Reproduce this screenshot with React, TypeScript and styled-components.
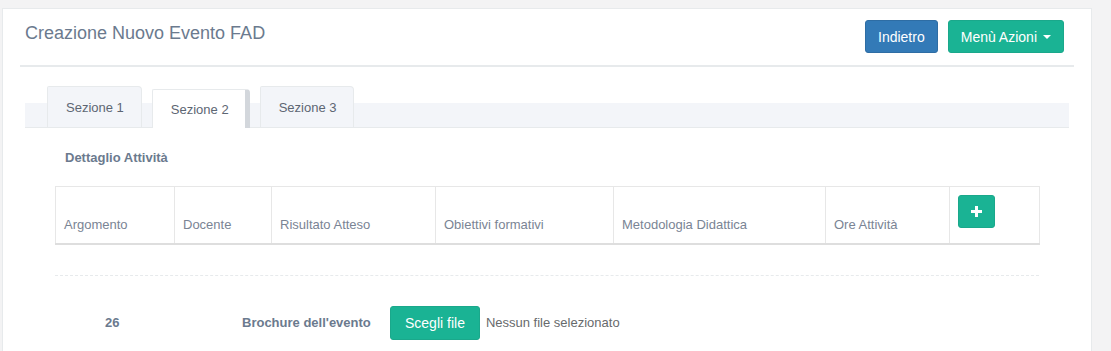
import React from "react";
import styled, { createGlobalStyle } from "styled-components";

const GlobalStyle = createGlobalStyle`
  html, body { margin: 0; padding: 0; background: #f3f3f4; }
  body { font-family: "Liberation Sans", Arial, sans-serif; font-size: 13px; color: #676a6c; }
  * { box-sizing: border-box; }
`;

const Page = styled.div`
  padding: 8px 19px 0 2px;
  height: 351px;
  overflow: hidden;
`;

const Panel = styled.div`
  background: #fff;
  border: 1px solid #e7eaec;
  border-bottom: none;
  padding: 0 17px;
  height: 343px;
`;

const Header = styled.div`
  display: flex;
  align-items: flex-start;
  justify-content: space-between;
  height: 58px;
  border-bottom: 2px solid #e7eaec;
  padding: 11px 10px 0 5px;
`;

const Title = styled.h2`
  margin: 0;
  padding-top: 2px;
  font-size: 18px;
  font-weight: 400;
  line-height: 22px;
  color: #6b7a8e;
`;

const Actions = styled.div`
  display: flex;
  gap: 10px;
`;

const Button = styled.button<{ $variant: "primary" | "success" }>`
  font-family: "Liberation Sans", Arial, sans-serif;
  font-size: 14px;
  line-height: 20px;
  height: 33px;
  padding: 0 12px;
  border-radius: 3px;
  border: 1px solid ${(p) => (p.$variant === "primary" ? "#2e6da4" : "#1aa88b")};
  background: ${(p) => (p.$variant === "primary" ? "#337ab7" : "#1ab394")};
  color: #fff;
  display: inline-flex;
  align-items: center;
  gap: 4px;
  cursor: pointer;
`;

const Caret = styled.span`
  display: inline-block;
  width: 0;
  height: 0;
  border-left: 4px solid transparent;
  border-right: 4px solid transparent;
  border-top: 4px solid #fff;
  margin-left: 2px;
`;

const TabArea = styled.div`
  margin: 19px 5px 0 5px;
`;

const TabStrip = styled.div`
  display: flex;
  align-items: flex-end;
  gap: 10px;
  padding-left: 22px;
  height: 42px;
  border-bottom: 1px solid #e7eaec;
  background: linear-gradient(to bottom, transparent 0, transparent 17px, #f3f5f9 17px);
`;

const Tab = styled.div<{ $active?: boolean }>`
  height: ${(p) => (p.$active ? "39px" : "41px")};
  padding: 0 ${(p) => (p.$active ? "16px" : "17px")} 0 18px;
  display: flex;
  align-items: center;
  font-size: 13px;
  color: #5d6673;
  background: ${(p) => (p.$active ? "#fff" : "#f3f5f9")};
  border: 1px solid #e7eaec;
  border-bottom: none;
  border-right: ${(p) => (p.$active ? "5px solid #d3d7dc" : "1px solid #e7eaec")};
  border-radius: 2px 4px 0 0;
  margin-bottom: ${(p) => (p.$active ? "-1px" : "0")};
  padding-top: ${(p) => (p.$active ? "1px" : "0")};
`;

const Section = styled.div`
  padding: 0 35px 0 35px;
`;

const SectionTitle = styled.div`
  font-weight: 700;
  font-size: 13px;
  color: #6b7a8e;
  padding: 22px 0 0 10px;
  height: 58px;
`;

const Table = styled.table`
  width: 984px;
  border-collapse: collapse;
  table-layout: fixed;
`;

const Th = styled.th<{ $w: number }>`
  width: ${(p) => p.$w}px;
  border: 1px solid #e7e7e7;
  border-bottom: 2px solid #dedede;
  text-align: left;
  vertical-align: bottom;
  padding: 8px 8px 8px;
  font-weight: 400;
  font-size: 13px;
  line-height: 20px;
  color: #7a8494;
  height: 57px;
`;

const ThBtn = styled(Th)`
  vertical-align: top;
  padding-top: 8px;
`;

const AddButton = styled.button`
  width: 37px;
  height: 33px;
  border-radius: 3px;
  background: #1ab394;
  border: 1px solid #1aa88b;
  display: flex;
  align-items: center;
  justify-content: center;
  padding: 0;
  cursor: pointer;
`;

const Divider = styled.div`
  margin-top: 30px;
  width: 984px;
  border-top: 1px dashed #e7eaec;
`;

const FormRow = styled.div`
  display: flex;
  align-items: center;
  margin-top: 30px;
  height: 34px;
`;

const RowNum = styled.div`
  width: 187px;
  padding-left: 50px;
  font-weight: 700;
  color: #6b7a8e;
`;

const RowLabel = styled.div`
  width: 148px;
  font-weight: 700;
  color: #6b7a8e;
`;

const FileButton = styled(Button)`
  height: 34px;
  padding: 0 14px;
`;

const FileName = styled.span`
  margin-left: 6px;
  font-size: 13px;
  color: #676a6c;
`;

const cols: [string, number][] = [
  ["Argomento", 119],
  ["Docente", 97],
  ["Risultato Atteso", 164],
  ["Obiettivi formativi", 178],
  ["Metodologia Didattica", 212],
  ["Ore Attività", 124],
];

export default function App() {
  return (
    <>
      <GlobalStyle />
      <Page>
        <Panel>
          <Header>
            <Title>Creazione Nuovo Evento FAD</Title>
            <Actions>
              <Button $variant="primary">Indietro</Button>
              <Button $variant="success">
                Menù Azioni <Caret />
              </Button>
            </Actions>
          </Header>
          <TabArea>
            <TabStrip>
              <Tab>Sezione 1</Tab>
              <Tab $active>Sezione 2</Tab>
              <Tab>Sezione 3</Tab>
            </TabStrip>
          </TabArea>
          <Section>
            <SectionTitle>Dettaglio Attività</SectionTitle>
            <Table>
              <thead>
                <tr>
                  {cols.map(([t, w]) => (
                    <Th key={t} $w={w}>
                      {t}
                    </Th>
                  ))}
                  <ThBtn $w={90}>
                    <AddButton aria-label="Aggiungi">
                      <svg width="11" height="11" viewBox="0 0 11 11">
                        <path d="M4 0h3v4h4v3H7v4H4V7H0V4h4z" fill="#fff" />
                      </svg>
                    </AddButton>
                  </ThBtn>
                </tr>
              </thead>
            </Table>
            <Divider />
            <FormRow>
              <RowNum>26</RowNum>
              <RowLabel>Brochure dell'evento</RowLabel>
              <FileButton $variant="success">Scegli file</FileButton>
              <FileName>Nessun file selezionato</FileName>
            </FormRow>
          </Section>
        </Panel>
      </Page>
    </>
  );
}
